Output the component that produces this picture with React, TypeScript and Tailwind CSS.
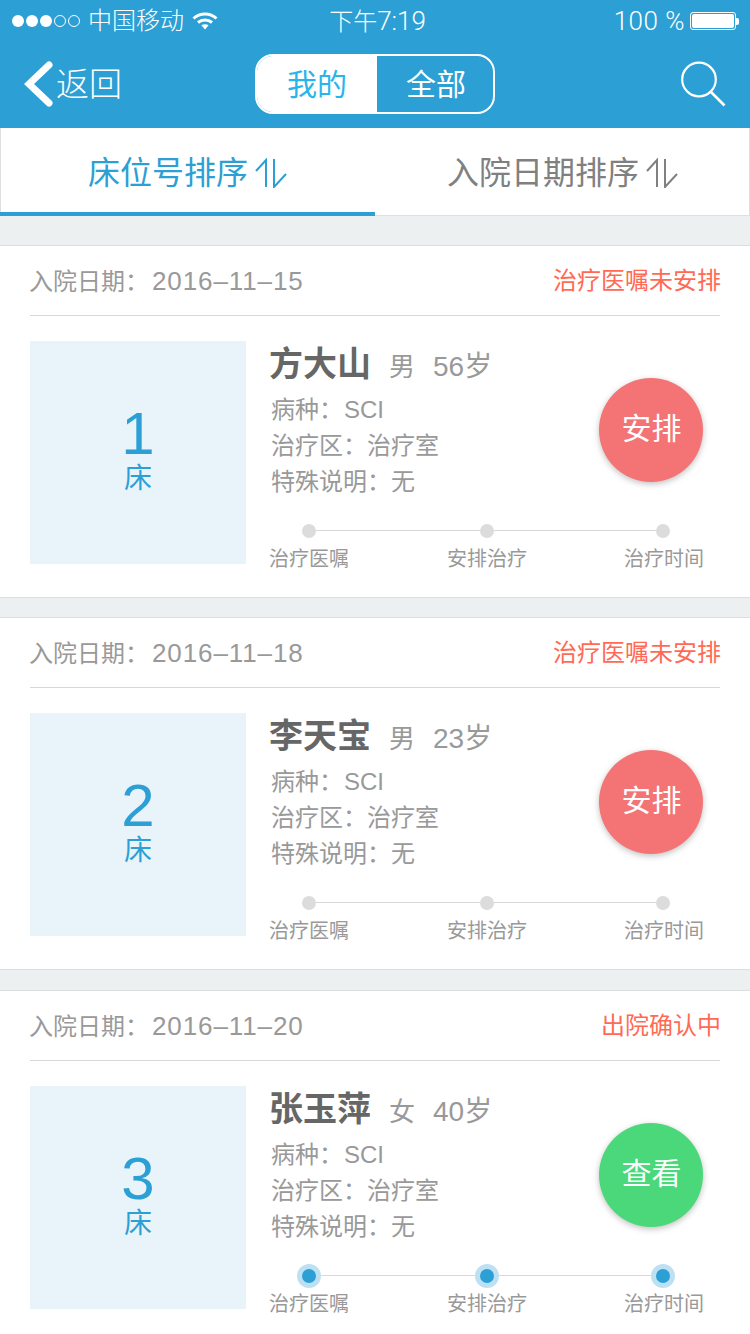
// App.tsx
import React from "react";

const font = "font-['Liberation_Sans','Noto_Sans_CJK_SC',sans-serif]";

function SortIcon({ color }: { color: string }) {
  return (
    <svg width="32" height="30" viewBox="0 0 32 30" fill="none" stroke={color} strokeWidth="2">
      <path d="M11 29V2L1 13" />
      <path d="M19 1v28l12-13" />
    </svg>
  );
}

function StatusBar() {
  return (
    <div className="flex h-[42px] items-center text-white pl-[12px] pr-[11px] font-['Roboto','Noto_Sans_CJK_SC',sans-serif] font-light">
      <div className="flex flex-1 items-center">
        <div className="flex items-center gap-[2px]">
          <span className="w-[12px] h-[12px] rounded-full bg-white" />
          <span className="w-[12px] h-[12px] rounded-full bg-white" />
          <span className="w-[12px] h-[12px] rounded-full bg-white" />
          <span className="w-[12px] h-[12px] rounded-full border border-white" />
          <span className="w-[12px] h-[12px] rounded-full border border-white" />
        </div>
        <span className="ml-[8px] text-[24px] leading-none">中国移动</span>
        <svg className="ml-[8px]" width="26" height="18" viewBox="0 0 26 18" fill="none" stroke="#fff" strokeWidth="3">
          <path d="M1.5 6.5C8 .5 18 .5 24.5 6.5" />
          <path d="M6 10.5c4-3.4 10-3.4 14 0" />
          <path d="M13 17.5l-3.6-4.2c2-1.4 5.2-1.4 7.2 0z" fill="#fff" stroke="none" />
        </svg>
      </div>
      <span className="ml-[4px] text-[24px] leading-none">
        下午<span className="text-[26px]">7:19</span>
      </span>
      <div className="flex flex-1 items-center justify-end">
        <span className="text-[26px] leading-none tracking-[0.5px]">100 %</span>
        <div className="ml-[5px] w-[46px] h-[18px] rounded-[3px] border border-white p-[1px]">
          <div className="w-full h-full rounded-[2px] bg-white" />
        </div>
        <div className="w-[3px] h-[7px] bg-white rounded-r-[2px]" />
      </div>
    </div>
  );
}

function NavBar() {
  return (
    <div className="flex h-[86px] items-center justify-between px-[24px] pb-[2px] text-white">
      <div className="flex w-[200px] items-center">
        <svg width="30" height="46" viewBox="0 0 30 46" fill="none" stroke="#fff" strokeWidth="7" strokeLinecap="round" strokeLinejoin="miter">
          <path d="M25 4 5 23l20 19" />
        </svg>
        <span className="ml-[2px] text-[33px] leading-none font-light">返回</span>
      </div>
      <div className="flex w-[240px] h-[60px] rounded-[18px] border-2 border-white overflow-hidden text-[30px]">
        <div className="flex w-[120px] items-center justify-center bg-white text-[#2ab4ea]">我的</div>
        <div className="flex flex-1 items-center justify-center pl-[2px]">全部</div>
      </div>
      <div className="flex w-[200px] justify-end">
        <svg width="46" height="46" viewBox="0 0 46 46" fill="none" stroke="#fff" strokeWidth="2.2">
          <circle cx="19" cy="18.5" r="16.8" />
          <path d="M31 31l13.5 13.5" strokeWidth="2.6" />
        </svg>
      </div>
    </div>
  );
}

function Tabs() {
  return (
    <div className="flex h-[88px] bg-white border-x border-b border-[#dde0e0]">
      <div className="flex w-[375px] -ml-px -mb-px items-center justify-center gap-[7px] border-b-4 border-[#2ca0d4] pt-[6px] text-[32px] text-[#2ca0d4]">
        床位号排序
        <SortIcon color="#2ca0d4" />
      </div>
      <div className="flex flex-1 items-center justify-center gap-[7px] pt-[3px] pl-[1px] text-[32px] text-[#808080]">
        入院日期排序
        <SortIcon color="#808080" />
      </div>
    </div>
  );
}

type Patient = {
  bed: number;
  date: string;
  status: string;
  name: string;
  gender: string;
  age: string;
  action: string;
  actionColor: string;
  done: boolean;
};

function Dot({ done }: { done: boolean }) {
  if (done) {
    return <span className="relative z-10 shrink-0 w-[14px] h-[14px] rounded-full bg-[#2ca0d4] ring-[5px] ring-[#bde1f3]" />;
  }
  return <span className="shrink-0 w-[14px] h-[14px] rounded-full bg-[#dcdcdc]" />;
}

function Timeline({ done }: { done: boolean }) {
  return (
    <div className="mt-[24px] w-[434px]">
      <div className="flex items-center px-[33px]">
        <Dot done={done} />
        <span className="w-[164px] h-px bg-[#d8d8d8] -mt-px" />
        <Dot done={done} />
        <span className="flex-1 h-px bg-[#d8d8d8] -mt-px" />
        <Dot done={done} />
      </div>
      <div className="grid grid-cols-[178px_177px_79px] mt-[9px] whitespace-nowrap text-[20px] leading-[24px] text-[#999999]">
        <span>治疗医嘱</span>
        <span>安排治疗</span>
        <span>治疗时间</span>
      </div>
    </div>
  );
}

function PatientCard({ p }: { p: Patient }) {
  return (
    <div className={`h-[353px] bg-white border-y border-[#dcdfdf] px-[30px] shrink-0 ${p.bed === 3 ? "mt-[1px]" : ""}`}>
      <div className="flex h-[70px] items-center justify-between border-b border-[#d8d8d8] pt-[1px] text-[24px]">
        <span className="-ml-px text-[#999999]">
          入院日期：<span className="ml-[3px] text-[26px] tracking-[0.9px]">2016–11–{p.date}</span>
        </span>
        <span className="-mr-px text-[#ff6a55]">{p.status}</span>
      </div>
      <div className="flex pt-[25px]">
        <div className="flex flex-col w-[216px] h-[223px] items-center justify-center bg-[#e8f4fa] text-[#2ca0d4]">
          <span className="text-[60px] leading-[44px]">{p.bed}</span>
          <span className="mt-[8px] text-[28px] leading-[30px]">床</span>
        </div>
        <div className="ml-[23px] flex-1">
          <div className="flex justify-between">
            <div className="pl-[2px] text-[#999999]">
              <div className="flex items-baseline h-[48px] -ml-[2px] pt-[3px]">
                <span className="text-[34px] leading-[40px] font-bold text-[#666666]">{p.name}</span>
                <span className="ml-[18px] text-[26px]">{p.gender}</span>
                <span className="ml-[18px] text-[28px]">{p.age}</span>
              </div>
              <div className="mt-[3px] text-[24px] leading-[36px]">
                病种：<span className="ml-px">SCI</span>
              </div>
              <div className="text-[24px] leading-[36px]">治疗区：治疗室</div>
              <div className="text-[24px] leading-[36px]">特殊说明：无</div>
            </div>
            <div
              className="mt-[37px] mr-[17px] flex w-[104px] h-[104px] items-center justify-center rounded-full text-[30px] text-white shadow-[0_2px_6px_rgba(0,0,0,0.25)] pb-[4px] pl-[1px]"
              style={{ backgroundColor: p.actionColor }}
            >
              {p.action}
            </div>
          </div>
          <Timeline done={p.done} />
        </div>
      </div>
    </div>
  );
}

export default function App() {
  const patients: Patient[] = [
    { bed: 1, date: "15", status: "治疗医嘱未安排", name: "方大山", gender: "男", age: "56岁", action: "安排", actionColor: "#f47374", done: false },
    { bed: 2, date: "18", status: "治疗医嘱未安排", name: "李天宝", gender: "男", age: "23岁", action: "安排", actionColor: "#f47374", done: false },
    { bed: 3, date: "20", status: "出院确认中", name: "张玉萍", gender: "女", age: "40岁", action: "查看", actionColor: "#4ad87a", done: true },
  ];

  return (
    <div className={`w-[750px] h-[1334px] overflow-hidden bg-[#ecf0f1] ${font}`}>
      <div className="bg-[#2ca0d4]">
        <StatusBar />
        <NavBar />
      </div>
      <Tabs />
      <div className="flex flex-col gap-[19px] pt-[29px]">
        {patients.map((p) => (
          <PatientCard key={p.bed} p={p} />
        ))}
      </div>
    </div>
  );
}
